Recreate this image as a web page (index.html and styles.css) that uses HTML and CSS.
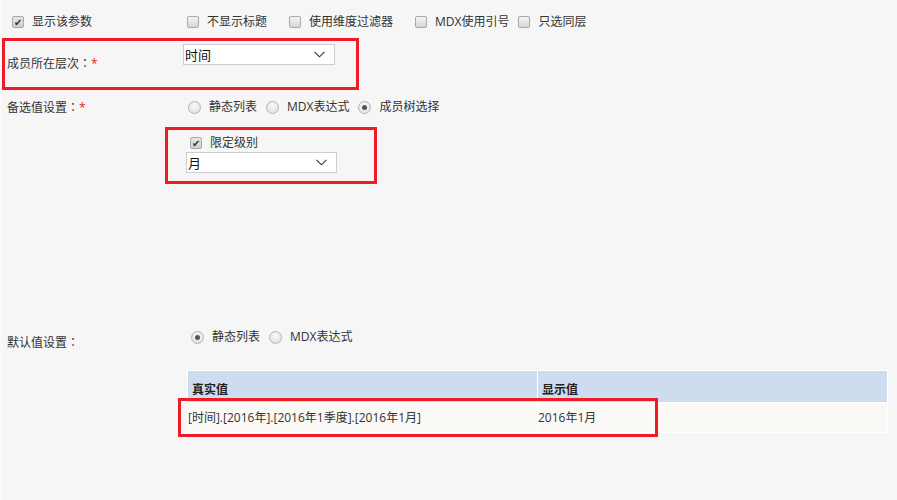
FILE: index.html
```html
<!DOCTYPE html>
<html lang="zh-CN">
<head>
<meta charset="UTF-8" />
<meta name="viewport" content="width=device-width, initial-scale=1" />
<title>参数设置</title>
<link rel="stylesheet" href="styles.css">
</head>
<body>

<div class="form">
  <div class="row row-top">
    <label class="check lead"><span class="box on"></span>显示该参数</label>
    <div class="opts">
      <label class="check wide"><span class="box"></span>不显示标题</label>
      <label class="check wide"><span class="box"></span>使用维度过滤器</label>
      <label class="check"><span class="box"></span>MDX使用引号</label>
      <label class="check"><span class="box"></span>只选同层</label>
    </div>
  </div>

  <div class="row row-level">
    <div class="label">成员所在层次<span class="colon" lang="ja">：</span><em>*</em></div>
    <div class="select select-level">
      <span>时间</span>
      <svg width="11" height="7" viewBox="0 0 11 7"><path d="M0.5 0.8 L5.5 5.8 L10.5 0.8" fill="none" stroke="#333" stroke-width="1.1"/></svg>
    </div>
  </div>

  <div class="row row-alt">
    <div class="label">备选值设置<span class="colon" lang="ja">：</span><em>*</em></div>
    <div class="opts">
      <label class="radio"><span class="dot"></span>静态列表</label>
      <label class="radio"><span class="dot"></span>MDX表达式</label>
      <label class="radio"><span class="dot on"></span>成员树选择</label>
    </div>
  </div>

  <div class="sub">
    <label class="check"><span class="box on"></span>限定级别</label>
    <div class="select select-sub">
      <span>月</span>
      <svg width="11" height="7" viewBox="0 0 11 7"><path d="M0.5 0.8 L5.5 5.8 L10.5 0.8" fill="none" stroke="#333" stroke-width="1.1"/></svg>
    </div>
  </div>

  <div class="row row-default">
    <div class="label">默认值设置<span class="colon" lang="ja">：</span></div>
    <div class="opts">
      <label class="radio"><span class="dot on"></span>静态列表</label>
      <label class="radio"><span class="dot"></span>MDX表达式</label>
    </div>
  </div>

  <table class="grid">
    <thead>
      <tr><th class="c1">真实值</th><th>显示值</th></tr>
    </thead>
    <tbody>
      <tr><td>[时间].[2016年].[2016年1季度].[2016年1月]</td><td>2016年1月</td></tr>
    </tbody>
  </table>

  <!-- annotation frames -->
  <div class="mark mark-level"></div>
  <div class="mark mark-sub"></div>
  <div class="mark mark-row"></div>
</div>

</body>
</html>
```

FILE: styles.css
```css
body {
  margin: 0;
  background: #f6f6f6;
  font-family: "Open Sans", "Noto Sans CJK SC", sans-serif;
  font-size: 12px;
  color: #333;
  height: 500px;
  overflow: hidden;
}
.form {
  position: relative;
  height: 500px;
  border-left: 1px solid #fafafa;
}
.row {
  display: flex;
}
.label {
  width: 176px;
  padding-left: 6px;
  line-height: 16px;
}
.label .colon {
  font-family: "Noto Sans CJK JP", sans-serif;
}
.label em {
  color: #e02020;
  font-style: normal;
}
.opts {
  display: flex;
  align-items: center;
  gap: 9px;
}
.check, .radio {
  display: flex;
  align-items: center;
  line-height: 16px;
  white-space: nowrap;
}
.box {
  width: 10px;
  height: 10px;
  border: 1px solid #a9a9a9;
  border-radius: 2px;
  background: linear-gradient(#f4f4f4, #d6d6d6);
  margin-right: 8px;
  position: relative;
}
.box.on {
  background: linear-gradient(#e6e6e6, #cfcfcf);
}
.box.on::after {
  content: "✔";
  position: absolute;
  left: 1px;
  top: -3px;
  font-size: 10px;
  color: #333;
}
.dot {
  width: 11px;
  height: 11px;
  border: 1px solid #b4b4b4;
  border-radius: 50%;
  background: radial-gradient(circle at 50% 35%, #fafafa, #dcdcdc);
  margin-right: 8px;
  position: relative;
}
.dot.on::after {
  content: "";
  position: absolute;
  left: 3px;
  top: 3px;
  width: 5px;
  height: 5px;
  border-radius: 50%;
  background: #555;
}
.wide {
  margin-right: 13px;
}

/* row 1 */
.row-top {
  height: 42px;
  align-items: center;
}
.row-top .lead {
  width: 175px;
  padding-left: 11px;
  padding-top: 1px;
}
.row-top .opts {
  padding-top: 1px;
}

/* level row */
.row-level {
  height: 50px;
}
.row-level .label {
  padding-top: 13px;
}
.select {
  display: flex;
  align-items: center;
  justify-content: space-between;
  box-sizing: border-box;
  height: 21px;
  background: #fff;
  border: 1px solid #cdcdcd;
  padding: 0 9px 0 1px;
  font-size: 13px;
  color: #111;
}
.select-level {
  width: 152px;
  margin-top: 2px;
}

/* alternatives */
.row-alt {
  height: 30px;
  align-items: center;
}
.row-alt .opts {
  padding-left: 5px;
}

.sub {
  margin-left: 185px;
  padding-top: 13px;
}
.sub .check {
  margin-left: 4px;
  margin-bottom: 1px;
}
.select-sub {
  width: 151px;
}

/* default */
.row-default {
  margin-top: 149px;
  height: 30px;
}
.row-default .label {
  padding-top: 12px;
}
.row-default .opts {
  padding-left: 8px;
  padding-top: 7px;
  align-items: flex-start;
}

.grid {
  margin: 18px 0 0 186px;
  width: 701px;
  border-collapse: collapse;
  border: 1px solid #fff;
}
.grid th, .grid td {
  border: 1px solid #fff;
  text-align: left;
  padding: 0;
}
.grid th {
  background: #cedcef;
  height: 26px;
  padding: 5px 4px 0;
  font-weight: bold;
  color: #222;
}
.grid th.c1 {
  width: 341px;
}
.grid td {
  background: #faf9f5;
  height: 27px;
  padding-bottom: 2px;
}

.mark {
  position: absolute;
  border: 3px solid #ee1c25;
  box-sizing: border-box;
}
.mark-level {
  left: 1px;
  top: 38px;
  width: 357px;
  height: 52px;
}
.mark-sub {
  left: 164px;
  top: 127px;
  width: 212px;
  height: 57px;
}
.mark-row {
  left: 177px;
  top: 398px;
  width: 480px;
  height: 39px;
}
```
